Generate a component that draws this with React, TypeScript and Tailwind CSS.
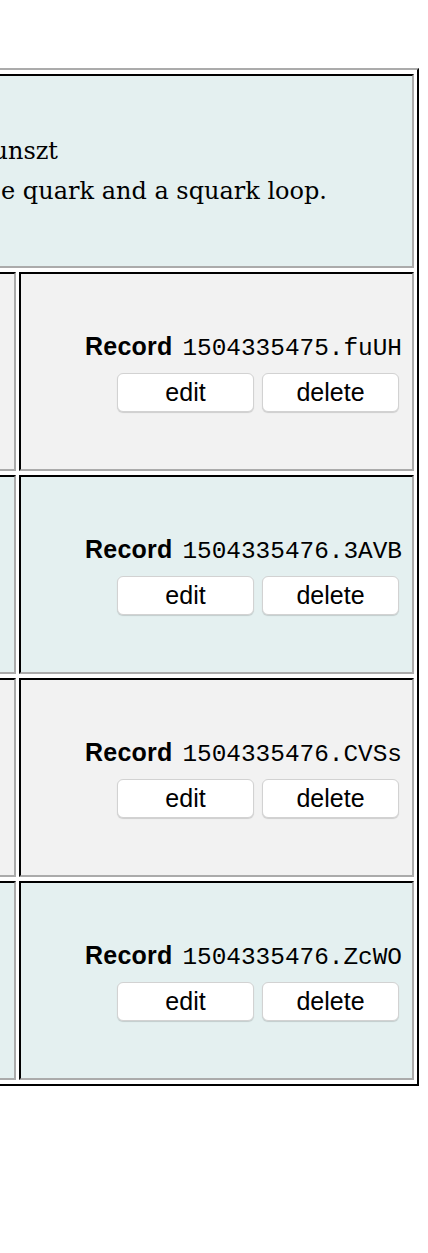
const records = [
    { id: '1504335475.fuUH', tone: 'gray' },
    { id: '1504335476.3AVB', tone: 'teal' },
    { id: '1504335476.CVSs', tone: 'gray' },
    { id: '1504335476.ZcWO', tone: 'teal' },
];

const cell = "border-2 border-t-black border-l-black border-b-[#ababab] border-r-[#ababab]";

function RecordCell({ id, tone }: { id: string; tone: string }) {
    return (
        <div className={`${cell} h-[199px] flex flex-col justify-center items-end ${tone === 'teal' ? 'bg-[#e4f0f0]' : 'bg-[#f2f2f2]'}`}>
            <div className="pr-[10px] leading-[30px] whitespace-nowrap flex items-baseline">
                <span className="font-['Liberation_Sans',sans-serif] font-bold text-[25px] tracking-[0.2px]">Record</span>
                <span className="ml-[10px] font-['Liberation_Mono',monospace] text-[24.4px]">{id}</span>
            </div>
            <div className="mt-[9px] pr-[13px] flex gap-[8px]">
                <button className="w-[137px] h-[39px] bg-white border border-[#d2d2d2] rounded-[6px] shadow-[0_1px_1px_rgba(0,0,0,0.15)] font-['Liberation_Sans',sans-serif] text-[25px] text-black leading-none">
                    edit
                </button>
                <button className="w-[137px] h-[39px] bg-white border border-[#d2d2d2] rounded-[6px] shadow-[0_1px_1px_rgba(0,0,0,0.15)] font-['Liberation_Sans',sans-serif] text-[25px] text-black leading-none">
                    delete
                </button>
            </div>
        </div>
    );
}

export default function App() {
    return (
        <div className="w-full min-h-[1253px] bg-white overflow-hidden pt-[68px]">
            {/* Table, left column scrolled out of view */}
            <div className="ml-[-389px] w-[808px] border-2 border-t-[#ababab] border-l-[#ababab] border-b-black border-r-black px-[3px] py-[4px] grid grid-cols-[400px_395px] gap-x-[3px] gap-y-[4px]">
                {/* Header */}
                <div className={`${cell} col-span-2 h-[194px] bg-[#e4f0f0] flex flex-col justify-center font-['DejaVu_Serif',serif] text-[24px] leading-[40px] text-black whitespace-nowrap`}>
                    <div className="text-right mr-[354px]">Authors: L. Grunszt</div>
                    <div className="text-right mr-[85px]">with a gluino, a light scalar e quark and a squark loop.</div>
                </div>

                {records.map((r) => (
                    <div key={r.id} className="contents">
                        <div className={`${cell} h-[199px] ${r.tone === 'teal' ? 'bg-[#e4f0f0]' : 'bg-[#f2f2f2]'}`} />
                        <RecordCell id={r.id} tone={r.tone} />
                    </div>
                ))}
            </div>
        </div>
    );
}
